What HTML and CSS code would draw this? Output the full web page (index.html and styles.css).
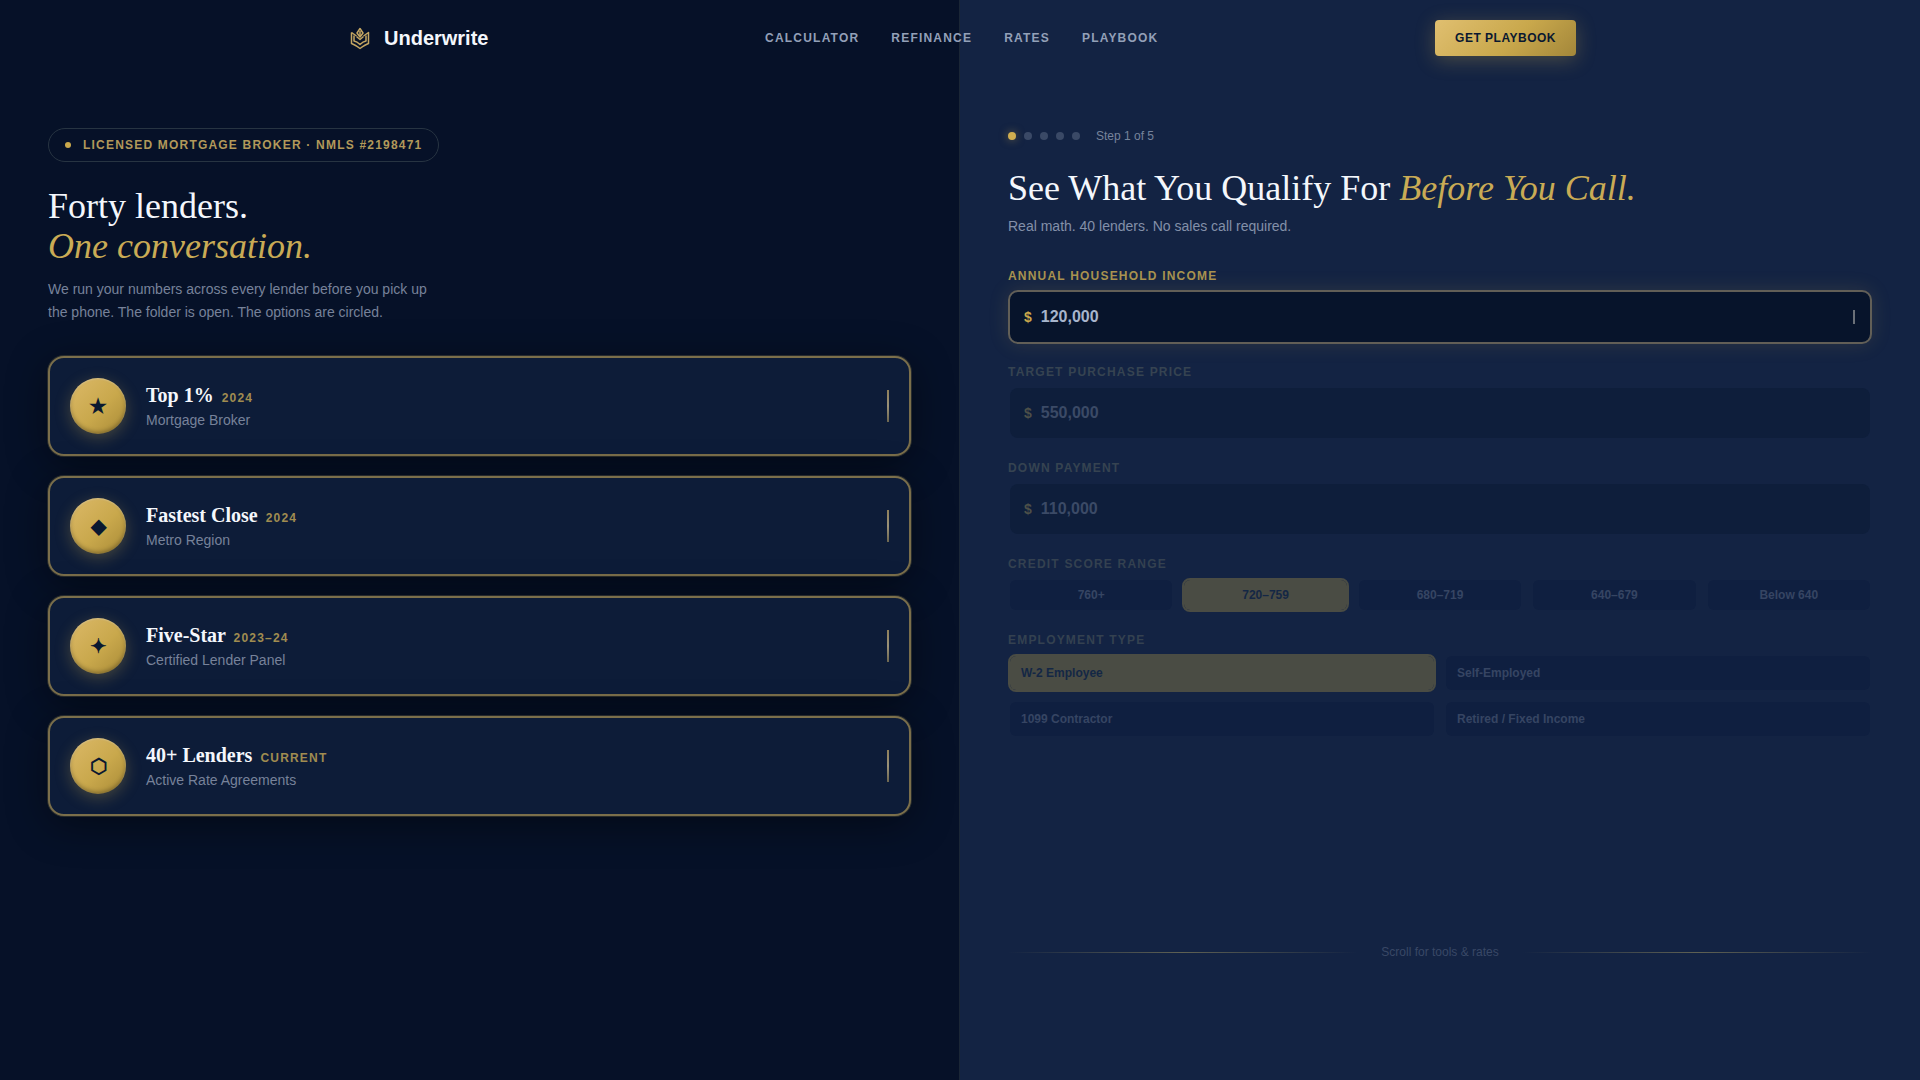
FILE: index.html
```
<!DOCTYPE html>
<html lang="en">
<head>
<meta charset="UTF-8">
<meta name="viewport" content="width=device-width, initial-scale=1.0">
<title>Underwrite</title>
<link rel="stylesheet" href="styles.css">
</head>
<body>

<header class="header">
    <div class="header-inner">
        <a href="#" class="logo">
            <svg class="logo-mark" viewBox="0 0 32 32" fill="none" stroke="#c4a662" stroke-width="1.5" stroke-linejoin="round">
                <path d="M7.500 10.500v11q3 1 8.500 5 5.500-4 8.500-5v-11l-5 3.500"/>
                <path d="M7.500 10.500l5 3.500"/>
                <path d="M10 13.500v5.500q3 .5 6 3.500 3-3 6-3.500v-5.500"/>
                <path d="M12.500 14.500l3.500 3 3.500-3"/>
                <path d="M16 6.500l3 4.500-3 4-3-4z"/>
                <path d="M16 9v6"/>
            </svg>
            <span>Underwrite</span>
        </a>
        <nav class="nav">
            <a href="#calculator">Calculator</a>
            <a href="#refinance">Refinance</a>
            <a href="#rates">Rates</a>
            <a href="#playbook">Playbook</a>
        </nav>
        <button type="button" class="btn-gold">Get Playbook</button>
    </div>
</header>

<main class="split">
    <section class="panel panel-left">
        <div class="pill"><span class="pill-dot"></span>Licensed Mortgage Broker · NMLS #2198471</div>
        <h1 class="title">Forty lenders.<br><em>One conversation.</em></h1>
        <p class="intro">We run your numbers across every lender before you pick up the phone. The folder is open. The options are circled.</p>

        <div class="awards">
            <article class="award">
                <span class="medal">★</span>
                <div class="award-text">
                    <h2>Top 1% <small>2024</small></h2>
                    <p>Mortgage Broker</p>
                </div>
                <span class="award-bar"></span>
            </article>
            <article class="award">
                <span class="medal">◆</span>
                <div class="award-text">
                    <h2>Fastest Close <small>2024</small></h2>
                    <p>Metro Region</p>
                </div>
                <span class="award-bar"></span>
            </article>
            <article class="award">
                <span class="medal">✦</span>
                <div class="award-text">
                    <h2>Five-Star <small>2023–24</small></h2>
                    <p>Certified Lender Panel</p>
                </div>
                <span class="award-bar"></span>
            </article>
            <article class="award">
                <span class="medal">⬡</span>
                <div class="award-text">
                    <h2>40+ Lenders <small>Current</small></h2>
                    <p>Active Rate Agreements</p>
                </div>
                <span class="award-bar"></span>
            </article>
        </div>
    </section>

    <section class="panel panel-right">
        <div class="steps">
            <span class="step active"></span>
            <span class="step"></span>
            <span class="step"></span>
            <span class="step"></span>
            <span class="step"></span>
            <span class="step-label">Step 1 of 5</span>
        </div>
        <h2 class="title">See What You Qualify For <em>Before You Call.</em></h2>
        <p class="sub">Real math. 40 lenders. No sales call required.</p>

        <form class="form">
            <div class="group">
                <label class="label" for="income">Annual Household Income</label>
                <div class="field field-active">
                    <span class="currency">$</span>
                    <input type="text" id="income" name="income" value="120,000">
                    <span class="cursor"></span>
                </div>
            </div>
            <div class="group dim">
                <label class="label" for="price">Target Purchase Price</label>
                <div class="field">
                    <span class="currency">$</span>
                    <input type="text" id="price" name="price" value="550,000">
                </div>
            </div>
            <div class="group dim">
                <label class="label" for="down">Down Payment</label>
                <div class="field">
                    <span class="currency">$</span>
                    <input type="text" id="down" name="down" value="110,000">
                </div>
            </div>
            <div class="group dim dim-more" role="group" aria-labelledby="credit-label">
                <span class="label" id="credit-label">Credit Score Range</span>
                <div class="scores">
                    <button type="button" class="option">760+</button>
                    <button type="button" class="option selected">720–759</button>
                    <button type="button" class="option">680–719</button>
                    <button type="button" class="option">640–679</button>
                    <button type="button" class="option">Below 640</button>
                </div>
            </div>
            <div class="group dim dim-more" role="group" aria-labelledby="employment-label">
                <span class="label" id="employment-label">Employment Type</span>
                <div class="jobs">
                    <button type="button" class="option selected">W-2 Employee</button>
                    <button type="button" class="option">Self-Employed</button>
                    <button type="button" class="option">1099 Contractor</button>
                    <button type="button" class="option">Retired / Fixed Income</button>
                </div>
            </div>
        </form>

        <div class="scroll-hint"><span>Scroll for tools &amp; rates</span></div>
    </section>
</main>

</body>
</html>
```
FILE: styles.css
```
* {
    box-sizing: border-box;
}
body {
    margin: 0;
    font-family: "Liberation Sans", Arial, sans-serif;
    background-color: #061128;
    color: #f4f7fc;
}
h1, h2, p {
    margin: 0;
}
a {
    color: inherit;
    text-decoration: none;
}
button, input {
    font-family: inherit;
}

/* Header */
.header {
    position: absolute;
    top: 0;
    left: 0;
    right: 0;
    z-index: 2;
}
.header-inner {
    display: flex;
    align-items: center;
    justify-content: space-between;
    max-width: 1280px;
    margin: 0 auto;
    padding: 20px 24px;
}
.logo {
    display: flex;
    align-items: center;
    gap: 8px;
    font-size: 20px;
    line-height: 32px;
    font-weight: bold;
}
.logo-mark {
    width: 32px;
    height: 32px;
}
.nav {
    display: flex;
    gap: 32px;
    font-size: 12px;
    font-weight: bold;
    letter-spacing: 0.1em;
    text-transform: uppercase;
    color: #93a0b8;
}
.btn-gold {
    padding: 0 20px;
    border: none;
    border-radius: 4px;
    background: linear-gradient(135deg, #e0bf70 0%, #c9a84c 55%, #a3873a 100%);
    box-shadow: 0 4px 20px rgba(201, 168, 76, 0.3);
    color: #0a1830;
    font-size: 12px;
    line-height: 36px;
    font-weight: bold;
    letter-spacing: 0.5px;
    text-transform: uppercase;
    cursor: pointer;
}

/* Panels */
.split {
    display: grid;
    grid-template-columns: 1fr 1fr;
    min-height: 100vh;
}
.panel {
    padding: 128px 48px 120px;
}
.panel-left {
    border-right: 1px solid #1a2636;
    overflow: hidden;
}
.panel-right {
    display: flex;
    flex-direction: column;
    background-color: #132343;
}
.title {
    font-family: "Liberation Serif", "Times New Roman", serif;
    font-size: 36px;
    line-height: 40px;
    font-weight: normal;
}
.title em {
    color: #c9ab55;
}

/* Left panel */
.pill {
    display: inline-flex;
    align-items: center;
    gap: 12px;
    padding: 0 16px;
    border: 1px solid #273442;
    border-radius: 17px;
    color: #b2995a;
    font-size: 12px;
    line-height: 32px;
    font-weight: bold;
    letter-spacing: 0.1em;
    text-transform: uppercase;
}
.pill-dot {
    width: 6px;
    height: 6px;
    border-radius: 50%;
    background-color: #c9a84c;
}
.panel-left .title {
    margin-top: 24px;
}
.intro {
    max-width: 384px;
    margin-top: 12px;
    color: #77829a;
    font-size: 14px;
    line-height: 23px;
}
.awards {
    display: grid;
    gap: 20px;
    margin-top: 32px;
}
.award {
    display: flex;
    align-items: center;
    gap: 20px;
    padding: 20px;
    border: 2px solid #7b6f4b;
    border-radius: 16px;
    background-color: #0d1c38;
    box-shadow: 0 0 0 1px rgba(123, 111, 75, 0.3), 0 8px 40px rgba(0, 0, 0, 0.45);
}
.medal {
    display: grid;
    place-items: center;
    width: 56px;
    height: 56px;
    border-radius: 50%;
    background: linear-gradient(135deg, #dcb968 0%, #c9a84c 55%, #a88a36 100%);
    box-shadow: 0 4px 16px rgba(201, 168, 76, 0.3), inset 0 1px 2px rgba(255, 255, 255, 0.3), inset 0 -2px 4px rgba(0, 0, 0, 0.3);
    color: #0a1830;
    font-size: 20px;
    line-height: 28px;
    font-weight: bold;
}
.award-text {
    flex: 1;
}
.award h2 {
    font-family: "Liberation Serif", "Times New Roman", serif;
    font-size: 20px;
    line-height: 24px;
}
.award small {
    margin-left: 3px;
    color: #a08c50;
    font-family: "Liberation Sans", Arial, sans-serif;
    font-size: 12px;
    letter-spacing: 0.1em;
    text-transform: uppercase;
}
.award p {
    color: #77829a;
    font-size: 14px;
    line-height: 20px;
}
.award-bar {
    width: 2px;
    height: 32px;
    background: linear-gradient(#8f805a, #9a9178, #6c6650);
}

/* Right panel */
.steps {
    display: flex;
    align-items: center;
    gap: 8px;
}
.step {
    width: 8px;
    height: 8px;
    border-radius: 50%;
    background-color: #3a4966;
}
.step.active {
    background-color: #d0ae50;
    box-shadow: 0 0 8px rgba(201, 168, 76, 0.5);
}
.step-label {
    margin-left: 8px;
    color: #77839b;
    font-size: 12px;
    line-height: 16px;
}
.panel-right .title {
    margin-top: 24px;
}
.sub {
    margin-top: 8px;
    color: #8390a9;
    font-size: 14px;
    line-height: 20px;
}
.form {
    display: grid;
    gap: 20px;
    margin-top: 32px;
}
.label {
    display: block;
    margin-bottom: 6px;
    color: #a8924f;
    font-size: 12px;
    line-height: 16px;
    font-weight: bold;
    letter-spacing: 0.1em;
    text-transform: uppercase;
}
.field {
    display: flex;
    align-items: center;
    gap: 9px;
    height: 54px;
    padding: 0 15px 0 14px;
    border: 2px solid transparent;
    border-radius: 10px;
    background-color: #07142b;
    background-clip: padding-box;
}
.field-active {
    border-color: #625f57;
    box-shadow: 0 0 20px rgba(201, 168, 76, 0.15);
}
.currency {
    color: #c9a84c;
    font-size: 14px;
    font-weight: bold;
}
.field input {
    flex: 1;
    min-width: 0;
    padding: 0;
    border: none;
    outline: none;
    background: none;
    color: #a7b5cc;
    font-size: 16px;
    font-weight: bold;
}
.cursor {
    width: 2px;
    height: 14px;
    background-color: #6a7078;
}
.dim .label {
    color: #364351;
}
.dim .field {
    background-color: #0e1e3b;
}
.dim .currency {
    color: #4c5049;
}
.dim .field input {
    color: #3b4a66;
}
.dim-more .label {
    color: #344150;
}
.scores {
    display: grid;
    grid-template-columns: repeat(5, 1fr);
    gap: 8px;
}
.jobs {
    display: grid;
    grid-template-columns: 1fr 1fr;
    gap: 8px;
}
.option {
    padding: 0;
    border: 2px solid transparent;
    border-radius: 8px;
    background-color: #0f1f40;
    background-clip: padding-box;
    color: #364563;
    font-size: 12px;
    line-height: 30px;
    font-weight: bold;
    cursor: pointer;
}
.jobs .option {
    padding: 0 11px;
    line-height: 34px;
    text-align: left;
}
.option.selected {
    border-color: #4a4c44;
    background-color: #4a4c44;
    color: #142745;
}
.scroll-hint {
    display: flex;
    align-items: center;
    gap: 24px;
    margin-top: auto;
    color: #394866;
    font-size: 12px;
    line-height: 16px;
}
.scroll-hint::before,
.scroll-hint::after {
    content: "";
    flex: 1;
    height: 1px;
    background: linear-gradient(to right, transparent, #5f6153, transparent);
}
```
